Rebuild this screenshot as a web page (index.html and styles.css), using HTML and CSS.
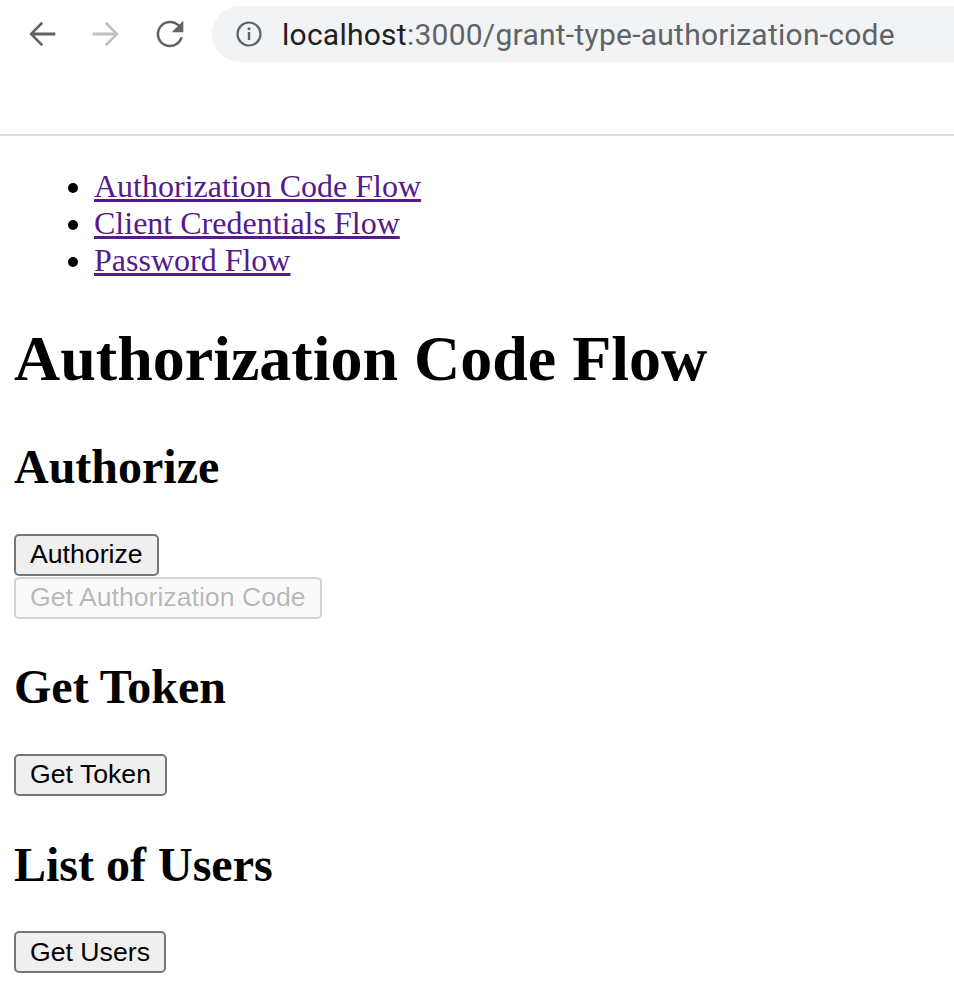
FILE: index.html
```html
<!DOCTYPE html>
<html lang="en">
<head>
<meta charset="utf-8">
<title>Authorization Code Flow</title>
<link rel="stylesheet" href="styles.css">
</head>
<body>
<header class="chrome">
  <div class="toolbar">
    <span class="tool">
      <svg viewBox="0 0 24 24" width="40" height="40"><path fill="#5f6368" d="M20 11.1H7.4l5.3-5.3-1.1-1.1L4.4 12l7.2 7.3 1.1-1.1-5.3-5.3H20z"/></svg>
    </span>
    <span class="tool">
      <svg viewBox="0 0 24 24" width="40" height="40"><path fill="#bdc1c6" d="M4 11.1h12.6l-5.3-5.3 1.1-1.1 7.2 7.3-7.2 7.3-1.1-1.1 5.3-5.3H4z"/></svg>
    </span>
    <span class="tool">
      <svg viewBox="0 0 24 24" width="40" height="40"><path fill="#5f6368" d="M17.65 6.35C16.2 4.9 14.21 4 12 4c-4.42 0-7.99 3.58-7.99 8s3.57 8 7.99 8c3.73 0 6.84-2.55 7.73-6h-1.6c-0.82 2.6-3.3 4.5-6.13 4.5-3.58 0-6.5-2.92-6.5-6.5S8.42 5.5 12 5.5c1.8 0 3.4 0.72 4.6 1.9L13 11h7V4l-2.35 2.35z"/></svg>
    </span>
    <div class="omnibox">
      <svg class="info" viewBox="0 0 28 28" width="28" height="28"><circle cx="14" cy="14" r="11.5" fill="none" stroke="#5f6368" stroke-width="2.2"/><rect x="12.8" y="12" width="2.4" height="8" fill="#5f6368"/><circle cx="14" cy="8.8" r="1.5" fill="#5f6368"/></svg>
      <span class="url"><span class="host">localhost</span>:3000/grant-type-authorization-code</span>
    </div>
  </div>
</header>
<main class="page">
  <ul class="nav">
    <li><a href="#">Authorization Code Flow</a></li>
    <li><a href="#">Client Credentials Flow</a></li>
    <li><a href="#">Password Flow</a></li>
  </ul>
  <h1 class="title">Authorization Code Flow</h1>
  <h2 class="section">Authorize</h2>
  <div class="actions">
    <button class="btn" type="button">Authorize</button>
    <button class="btn" type="button" disabled>Get Authorization Code</button>
  </div>
  <h2 class="section">Get Token</h2>
  <div class="actions">
    <button class="btn" type="button">Get Token</button>
  </div>
  <h2 class="section">List of Users</h2>
  <div class="actions">
    <button class="btn" type="button">Get Users</button>
  </div>
</main>
</body>
</html>
```
FILE: styles.css
```css
html, body {
  margin: 0;
  padding: 0;
  background: #fff;
}
body {
  font-family: "Liberation Serif", "Times New Roman", serif;
  font-size: 32px;
  color: #000;
  overflow: hidden;
}
.chrome {
  height: 134px;
  border-bottom: 2px solid #dadce0;
  overflow: hidden;
}
.toolbar {
  height: 68px;
  display: flex;
  align-items: center;
  padding-left: 22px;
  gap: 24px;
  width: 1100px;
}
.tool {
  width: 40px;
  height: 40px;
  display: flex;
}
.omnibox {
  margin-left: -2px;
  flex: 1;
  height: 56px;
  border-radius: 28px;
  background: #f1f3f4;
  display: flex;
  align-items: center;
  padding-left: 23px;
  gap: 19px;
}
.url {
  font-family: Roboto, "Liberation Sans", sans-serif;
  font-size: 30px;
  color: #5f6368;
  letter-spacing: 0.25px;
}
.host {
  color: #202124;
}
.page {
  padding: 0 14px;
}
.nav {
  margin: 32px 0;
  padding-left: 80px;
  line-height: 36.8px;
}
.nav a {
  color: #551a8b;
}
.title {
  font-size: 64px;
  line-height: 73.6px;
  margin: 43.4px 0;
}
.section {
  font-size: 48px;
  line-height: 55.2px;
  margin: 39.6px 0;
}
.actions {
  display: flex;
  flex-direction: column;
  align-items: flex-start;
}
.btn {
  font-family: "Liberation Sans", Arial, sans-serif;
  font-size: 26.67px;
  height: 42px;
  margin-bottom: 1px;
  padding: 0 14px;
  border: 2px solid #767676;
  border-radius: 5px;
  background: #efefef;
  color: #000;
}
.btn:disabled {
  border-color: rgba(118, 118, 118, 0.3);
  background: rgba(239, 239, 239, 0.3);
  color: rgba(16, 16, 16, 0.3);
}
```
